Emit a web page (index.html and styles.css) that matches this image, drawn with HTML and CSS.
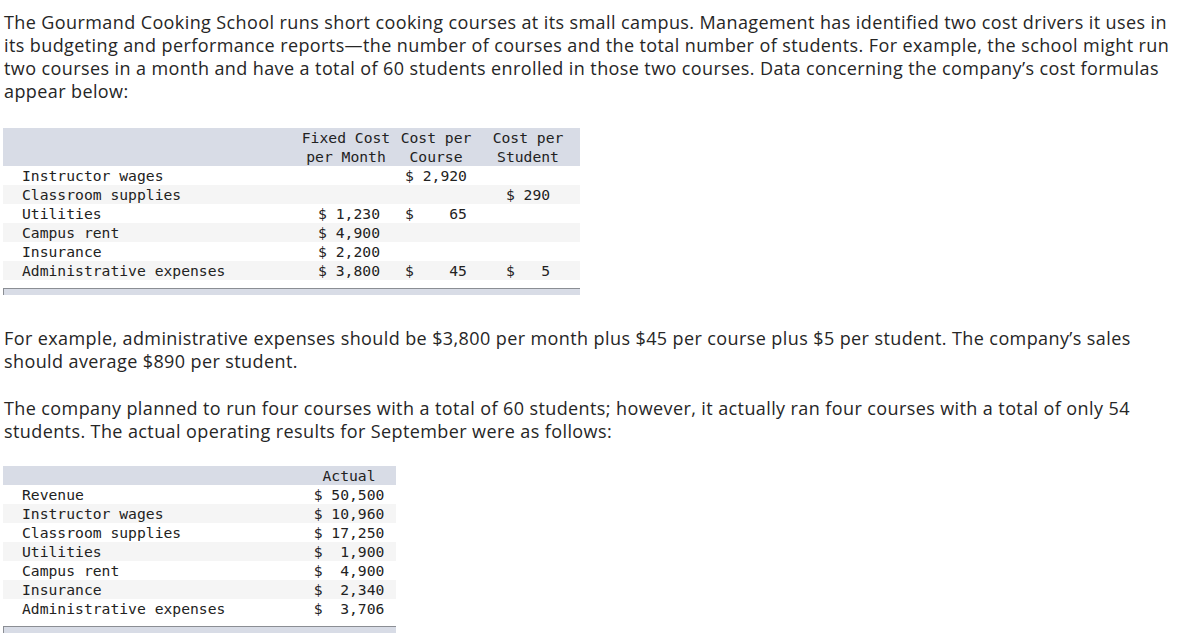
FILE: index.html
```html
<!DOCTYPE html>
<html>
<head>
<meta charset="utf-8">
<link rel="stylesheet" href="styles.css">
</head>
<body>
<div class="page">
  <p class="para p1">The Gourmand Cooking School runs short cooking courses at its small campus. Management has identified two cost drivers it uses in its budgeting and performance reports—the number of courses and the total number of students. For example, the school might run two courses in a month and have a total of 60 students enrolled in those two courses. Data concerning the company’s cost formulas appear below:</p>

  <div class="tbl-wrap t1">
    <table class="data">
      <colgroup>
        <col class="c-label1">
        <col class="c-fixed">
        <col class="c-course">
        <col class="c-student">
      </colgroup>
      <thead>
        <tr>
          <th></th>
          <th>Fixed Cost<br>per Month</th>
          <th>Cost per<br>Course</th>
          <th>Cost per<br>Student</th>
        </tr>
      </thead>
      <tbody>
        <tr><td class="lbl">Instructor wages</td><td class="v-fixed"></td><td class="v-c">$ 2,920</td><td class="v-c"></td></tr>
        <tr><td class="lbl">Classroom supplies</td><td class="v-fixed"></td><td class="v-c"></td><td class="v-c">$ 290</td></tr>
        <tr><td class="lbl">Utilities</td><td class="v-fixed">$ 1,230</td><td class="v-c">$    65</td><td class="v-c"></td></tr>
        <tr><td class="lbl">Campus rent</td><td class="v-fixed">$ 4,900</td><td class="v-c"></td><td class="v-c"></td></tr>
        <tr><td class="lbl">Insurance</td><td class="v-fixed">$ 2,200</td><td class="v-c"></td><td class="v-c"></td></tr>
        <tr><td class="lbl">Administrative expenses</td><td class="v-fixed">$ 3,800</td><td class="v-c">$    45</td><td class="v-c">$   5</td></tr>
      </tbody>
    </table>
    <div class="tbl-foot"></div>
  </div>

  <p class="para p2">For example, administrative expenses should be $3,800 per month plus $45 per course plus $5 per student. The company’s sales should average $890 per student.</p>

  <p class="para p3">The company planned to run four courses with a total of 60 students; however, it actually ran four courses with a total of only 54 students. The actual operating results for September were as follows:</p>

  <div class="tbl-wrap t2">
    <table class="data">
      <colgroup>
        <col class="c-label2">
        <col class="c-actual">
      </colgroup>
      <thead>
        <tr><th></th><th>Actual</th></tr>
      </thead>
      <tbody>
        <tr><td class="lbl">Revenue</td><td class="v-c">$ 50,500</td></tr>
        <tr><td class="lbl">Instructor wages</td><td class="v-c">$ 10,960</td></tr>
        <tr><td class="lbl">Classroom supplies</td><td class="v-c">$ 17,250</td></tr>
        <tr><td class="lbl">Utilities</td><td class="v-c">$  1,900</td></tr>
        <tr><td class="lbl">Campus rent</td><td class="v-c">$  4,900</td></tr>
        <tr><td class="lbl">Insurance</td><td class="v-c">$  2,340</td></tr>
        <tr><td class="lbl">Administrative expenses</td><td class="v-c">$  3,706</td></tr>
      </tbody>
    </table>
    <div class="tbl-foot"></div>
  </div>
</div>
</body>
</html>
```

FILE: styles.css
```css
html, body {
  margin: 0;
  padding: 0;
  background: #ffffff;
}

.page {
  padding: 11px 0 0 3px;
  width: 1172px;
  font-family: "Open Sans", "Liberation Sans", Arial, sans-serif;
  color: #262626;
}

.para {
  margin: 0;
  padding-left: 1px;
  font-size: 18px;
  letter-spacing: 0.4px;
  line-height: 23px;
}

.p1 { margin-bottom: 25px; }
.p2 { margin-top: 32px; margin-bottom: 24px; }
.p3 { margin-bottom: 23px; }

.tbl-wrap.t1 { width: 577px; }
.tbl-wrap.t2 { width: 393px; }

.data {
  width: 100%;
  border-collapse: collapse;
  table-layout: fixed;
  font-family: "DejaVu Sans Mono", "Liberation Mono", monospace;
  font-size: 14.7px;
  line-height: 19px;
  color: #222;
}

.c-label1 { width: 293px; }
.c-fixed { width: 100px; }
.c-course { width: 80px; }
.c-student { width: 104px; }

.c-label2 { width: 299px; }
.c-actual { width: 94px; }

.data th {
  background: #d8dce6;
  font-weight: normal;
  text-align: center;
  padding: 0;
  vertical-align: bottom;
  white-space: nowrap;
}

.data td {
  padding: 0;
  height: 19px;
  white-space: pre;
}

.data tbody tr:nth-child(even) td {
  background: #f5f5f5;
}

.data td.lbl {
  padding-left: 19px;
}

.data td.v-fixed {
  text-align: right;
  padding-right: 16px;
}

.data td.v-c {
  text-align: center;
}

.tbl-foot {
  margin-top: 8px;
  height: 6px;
  background: #d8dce6;
  border-top: 1px solid #8b8e94;
  border-left: 1px solid #8b8e94;
}
```
